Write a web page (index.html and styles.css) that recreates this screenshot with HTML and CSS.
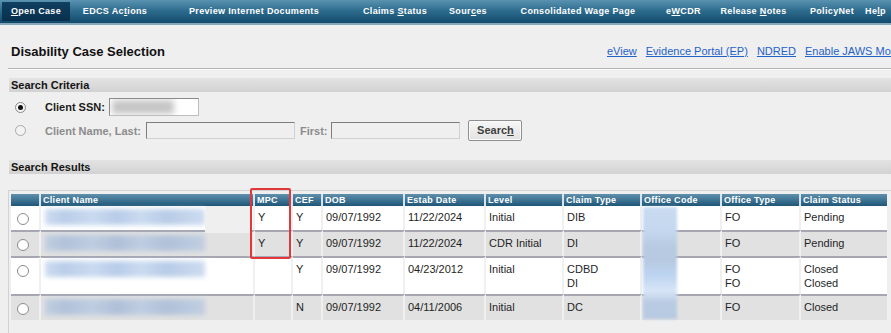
FILE: index.html
```html
<!DOCTYPE html>
<html>
<head>
<meta charset="utf-8">
<title>Disability Case Selection</title>
<link rel="stylesheet" href="styles.css">
</head>
<body>
<div class="page">
  <nav class="nav">
    <div class="nav-item active"><span class="tab"><u>O</u>pen Case</span></div>
    <div class="nav-item">EDCS Ac<u>t</u>ions</div>
    <div class="nav-item">Preview Internet Documents</div>
    <div class="nav-item">Claims <u>S</u>tatus</div>
    <div class="nav-item">Sour<u>c</u>es</div>
    <div class="nav-item">Consolidated Wage Page</div>
    <div class="nav-item">e<u>W</u>CDR</div>
    <div class="nav-item">Release <u>N</u>otes</div>
    <div class="nav-item">PolicyNet</div>
    <div class="nav-item">He<u>l</u>p</div>
  </nav>

  <div class="titlerow">
    <h1 class="title">Disability Case Selection</h1>
    <div class="links">
      <a href="#">eView</a>
      <a href="#">Evidence Portal (EP)</a>
      <a href="#">NDRED</a>
      <a href="#">Enable JAWS Mode</a>
    </div>
  </div>
  <div class="rule"></div>

  <div class="section-bar">Search Criteria</div>
  <div class="criteria">
    <div class="crow crow-ssn">
      <span class="radio checked"></span>
      <span class="lbl">Client SSN:</span>
      <span class="input ssn"><span class="redact-ssn"></span></span>
    </div>
    <div class="crow crow-name">
      <span class="radio disabled"></span>
      <span class="lbl lbl-dis">Client Name, Last:</span>
      <span class="input dis last"></span>
      <span class="lbl lbl-dis lbl-first">First:</span>
      <span class="input dis first"></span>
      <span class="btn">Searc<u>h</u></span>
    </div>
  </div>

  <div class="section-bar results-bar">Search Results</div>
  <div class="results">
    <table class="grid">
      <colgroup>
        <col class="c-radio"><col class="c-name"><col class="c-mpc"><col class="c-cef"><col class="c-dob"><col class="c-estab"><col class="c-level"><col class="c-type"><col class="c-ocode"><col class="c-otype"><col class="c-status">
      </colgroup>
      <thead>
        <tr>
          <th></th><th>Client Name</th><th>MPC</th><th>CEF</th><th>DOB</th><th>Estab Date</th><th>Level</th><th>Claim Type</th><th>Office Code</th><th>Office Type</th><th>Claim Status</th>
        </tr>
      </thead>
      <tbody>
        <tr class="odd">
          <td><span class="radio"></span></td>
          <td><div class="blur-name"></div></td>
          <td>Y</td><td>Y</td><td>09/07/1992</td><td>11/22/2024</td><td>Initial</td><td>DIB</td><td></td><td>FO</td><td>Pending</td>
        </tr>
        <tr class="even">
          <td><span class="radio"></span></td>
          <td><div class="blur-name gray"></div></td>
          <td>Y</td><td>Y</td><td>09/07/1992</td><td>11/22/2024</td><td>CDR Initial</td><td>DI</td><td></td><td>FO</td><td>Pending</td>
        </tr>
        <tr class="odd tall">
          <td><span class="radio"></span></td>
          <td><div class="blur-name"></div></td>
          <td></td><td>Y</td><td>09/07/1992</td><td>04/23/2012</td><td>Initial</td><td>CDBD<br>DI</td><td></td><td>FO<br>FO</td><td>Closed<br>Closed</td>
        </tr>
        <tr class="even">
          <td><span class="radio"></span></td>
          <td><div class="blur-name gray"></div></td>
          <td></td><td>N</td><td>09/07/1992</td><td>04/11/2006</td><td>Initial</td><td>DC</td><td></td><td>FO</td><td>Closed</td>
        </tr>
      </tbody>
    </table>
    <div class="patch-name"></div>
    <div class="blur-office"></div>
    <div class="highlight"></div>
  </div>
</div>
</body>
</html>
```

FILE: styles.css
```css
* { box-sizing: border-box; }
html, body { margin: 0; padding: 0; }
body {
  background: #efefef;
  font-family: "Liberation Sans", Arial, sans-serif;
  color: #1e1e1e;
  width: 891px;
  height: 333px;
  overflow: hidden;
}
.page { width: 891px; overflow: hidden; }

/* nav */
.nav {
  display: grid;
  grid-template-columns: 68px 90px 188px 94px 52px 168px 43px 97px 60px 27px;
  padding-left: 2px;
  height: 25px;
  background: linear-gradient(#5a93b1 0%, #2f6d8f 45%, #114a6c 100%);
  border-bottom: 2px solid #86a7ba;
}
.nav-item {
  color: #fff;
  font-size: 9px;
  font-weight: bold;
  letter-spacing: 0.35px;
  line-height: 23px;
  text-align: center;
  white-space: nowrap;
}
.nav-item u { text-decoration: underline; text-underline-offset: 1px; }
.nav-item.active { padding-top: 2px; }
.tab {
  display: block;
  height: 19px;
  line-height: 19px;
  background: linear-gradient(#103f60, #08304d);
}

/* title */
.titlerow {
  display: flex;
  align-items: center;
  height: 20px;
  margin-top: 16px;
  white-space: nowrap;
  overflow: hidden;
}
.title {
  flex: 0 0 607px;
  margin: 0;
  padding-left: 11px;
  font-size: 13px;
  font-weight: bold;
  color: #111;
}
.links { display: flex; gap: 9px; }
.links a {
  color: #1f62c9;
  font-size: 11px;
  text-decoration: underline;
}
.rule {
  margin: 7px 0 0 8px;
  border-top: 1px solid #b3b3b3;
  border-bottom: 1px solid #fbfbfb;
}

/* section bars */
.section-bar {
  margin: 8px 0 0 9px;
  height: 14px;
  line-height: 14px;
  padding-left: 2px;
  font-size: 11px;
  font-weight: bold;
  color: #141414;
  background: linear-gradient(#e3e3e3, #d2d2d2);
}
.results-bar { margin-top: 19px; }

/* criteria */
.criteria { padding-top: 6px; }
.crow {
  display: flex;
  align-items: center;
  padding-left: 15px;
}
.crow-ssn { height: 18px; }
.crow-name { height: 21px; margin-top: 4px; }
.radio {
  display: inline-block;
  width: 11px;
  height: 11px;
  border-radius: 50%;
  border: 1px solid #8a8a8a;
  background: #fdfdfd;
  flex: 0 0 auto;
  position: relative;
}
.radio.checked { background: #f4f4f4; }
.radio.checked::after {
  content: "";
  position: absolute;
  left: 2px; top: 2px;
  width: 5px; height: 5px;
  border-radius: 50%;
  background: #111;
}
.radio.disabled { border-color: #a9a9a9; background: #f3f3f3; }
.crow .radio { margin-right: 19px; }
.lbl {
  font-size: 11px;
  font-weight: bold;
  color: #1b1b1b;
  white-space: nowrap;
}
.lbl-dis { color: #8c8c8c; }
.input {
  display: inline-block;
  height: 18px;
  border: 1px solid;
  border-color: #8a8a8a #bdbdbd #bdbdbd #8a8a8a;
  background: #fff;
  position: relative;
  overflow: hidden;
}
.ssn { width: 90px; margin-left: 4px; }
.redact-ssn {
  position: absolute;
  left: 2px; top: 1px;
  width: 62px; height: 14px;
  background: #c6c6c6;
  filter: blur(3px);
}
.input.dis {
  height: 17px;
  background: #efefef;
  border-color: #7d7d7d #d0d0d0 #d0d0d0 #7d7d7d;
}
.last { width: 149px; margin-left: 5px; }
.lbl-first { margin-left: 5px; }
.first { width: 129px; margin-left: 4px; }
.btn {
  display: inline-block;
  width: 54px;
  height: 21px;
  line-height: 19px;
  margin-left: 8px;
  text-align: center;
  font-size: 11px;
  font-weight: bold;
  color: #404040;
  border: 1px solid #8f8f8f;
  border-radius: 2px;
  background: linear-gradient(#f6f6f6, #e2e2e2);
  box-shadow: inset 0 0 0 1px #fafafa;
}

/* results */
.results {
  position: relative;
  margin: 16px 0 0 8px;
  height: 143px;
  border: 1px solid #d2d2d2;
  border-right: none;
  border-bottom: none;
  padding: 3px 0 0 2px;
}
.grid {
  width: 876px;
  table-layout: fixed;
  border-collapse: separate;
  border-spacing: 0;
  font-size: 11px;
}
.c-radio { width: 30px; }
.c-name { width: 214px; }
.c-mpc { width: 38px; }
.c-cef { width: 30px; }
.c-dob { width: 82px; }
.c-estab { width: 81px; }
.c-level { width: 78px; }
.c-type { width: 78px; }
.c-ocode { width: 80px; }
.c-otype { width: 79px; }
.c-status { width: 86px; }

.grid th {
  height: 12px;
  padding: 0 0 0 2px;
  text-align: left;
  font-size: 9px;
  line-height: 12px;
  letter-spacing: 0.3px;
  font-weight: bold;
  color: #fff;
  background: linear-gradient(#5f90ad, #1e5678);
  border-right: 2px solid #d9e3ea;
  white-space: nowrap;
  overflow: hidden;
}
.grid th:last-child { border-right: none; }
.grid td {
  padding: 4px 3px 6px;
  line-height: 14px;
  vertical-align: top;
  color: #1f1f1f;
  border-right: 2px solid #f0f0f0;
  white-space: nowrap;
}
.grid td:last-child { border-right: none; }
.grid tbody tr + tr td { border-top: 2px solid #a7a7b4; }
.grid tr.odd td { background: #ffffff; }
.grid tr.even td { background: #e1e1e1; }
.grid tr.tall td { padding-bottom: 4px; }
.grid td .radio {
  margin: 3px 0 -3px 3px;
  width: 12px;
  height: 12px;
  border: 1.5px solid #8c8c8c;
  background: #fff;
  display: block;
}
.blur-name {
  width: 160px;
  height: 16px;
  margin: -1px 0 -1px 1px;
  background: linear-gradient(90deg, #cddcf0 0%, #bacee9 12%, #c9daf0 30%, #b8cce8 45%, #cadbf0 60%, #b8cce7 76%, #cddcf0 100%);
  filter: blur(2.5px);
}
.blur-name.gray {
  background: linear-gradient(90deg, #c1cfe1 0%, #b2c2da 12%, #becde1 30%, #b0c0d9 45%, #bfcde1 60%, #b0c1d9 76%, #c1cfe1 100%);
}
.patch-name {
  position: absolute;
  left: 196px;
  top: 15px;
  width: 47px;
  height: 27px;
  background: #efefef;
}
.blur-office {
  position: absolute;
  left: 634px;
  top: 16px;
  width: 34px;
  height: 112px;
  background: linear-gradient(#c9dbf1 0%, #c4d7ee 22%, #b8cae2 35%, #b7c9e1 48%, #bcd3f0 60%, #d7e5f6 75%, #b9cbe3 85%, #b8cae2 100%);
  filter: blur(1.5px);
}
.highlight {
  position: absolute;
  left: 241px;
  top: -3px;
  width: 41px;
  height: 71px;
  border: 2px solid #e3383b;
  border-radius: 2px;
}
```
